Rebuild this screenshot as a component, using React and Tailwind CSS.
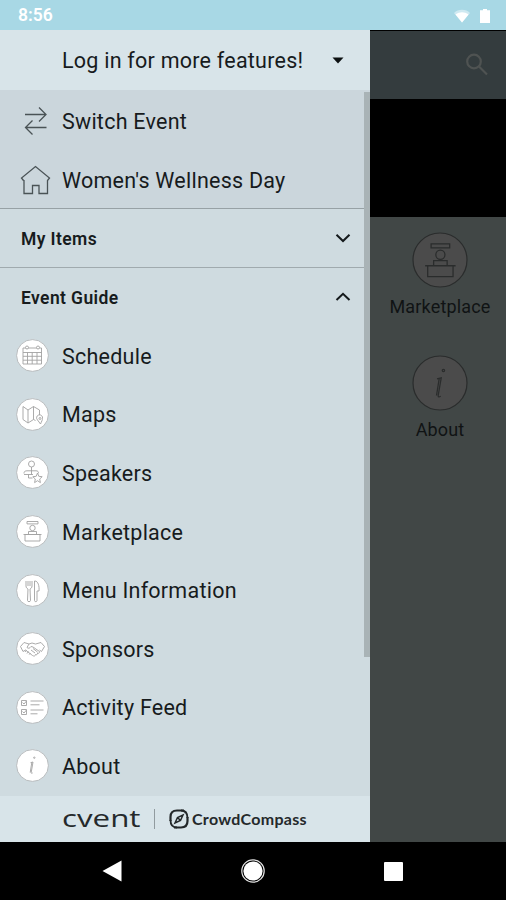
import { useState } from 'react';

const CalendarIcon = () => (
  <>
    <path d="M7 9h18.500v16H7zM7 13.500h18.500M7 17.300h18.500M7 21.200h18.500M11.500 13.500V25M16.200 13.500V25M21 13.500V25" />
    <circle cx="11" cy="8.500" r="1.500" fill="#fff" />
    <circle cx="22" cy="8.500" r="1.500" fill="#fff" />
  </>
);

const MapIcon = () => (
  <>
    <path d="M7 8.500l5 3.500v13l-5-3.500zM12 12l5.500-3.500v13L12 25M17.500 8.500l6 3.500v5M17.500 21.500l2 1" />
    <path d="M24.500 26l-3-4a3 3 0 1 1 5-1.500c0 1.500-1 3-2 5.500z" />
    <circle cx="24" cy="20.500" r="1" />
  </>
);

const SpeakerIcon = () => (
  <>
    <circle cx="15.500" cy="8" r="3" />
    <path d="M15.500 11v7.500M8 17.500c0-2 1-2.700 3-2.700h9c2 0 2.500 1 2.500 2.500M8 18.500h9M12.500 18.500v3.500h4" />
    <path d="M21.500 17l1.300 3.300 3.400.4-2.500 2.300.7 3.600-2.900-1.900-2.900 1.900.7-3.600-2.500-2.300 3.400-.4z" />
  </>
);

const MarketplaceIcon = () => (
  <>
    <path d="M11 6.500h11v2.400H11zM12.500 19v-2.500h8V19M9 19.500h15V26H9zM7.500 19.500h18" />
    <circle cx="16.500" cy="13" r="2.700" />
  </>
);

const MenuIcon = () => (
  <>
    <path d="M10 7v5c0 1.500 1 2.500 2 3l-.5 11.500c0 1.500 3 1.500 3 0L14 15c1-.5 2-1.500 2-3V7M12 7v5M14 7v5" />
    <path d="M19 7c3 0 4.500 5 4 10h-2v9.500c0 1.500-2.500 1.500-2.500 0V7z" />
  </>
);

const HandshakeIcon = () => (
  <>
    <path d="M8 10.500l-3.500 4 2.500 5 2.500-1.500M8 10.500l5 1.500 3-1 3.500 1 5.500-1.500 3.500 4-3 5-2-1.500M13 12l-2 3.500c1.500 1.500 3 .5 4-1l2 .5 6.500 4.500c.5 1.500-1 2.200-2 1.500.3 1.500-1 2.200-2 1.500 0 1.500-1.500 2-3 1L9.500 18" />
    <path d="M15 18l4 3M17 16.500l4.500 3.500M10.500 18l-1.500 2M12.500 19.500l-1.500 2M14.500 21l-1.300 1.600" />
  </>
);

const FeedIcon = () => (
  <>
    <path d="M5.500 9.500h5v5h-5zM5.500 18.500h5v5h-5zM14.500 10h13M14.500 13.800h9M14.500 19h13M14.500 22.800h7" />
    <path d="M6.500 11.500l1.500 1.500 2.500-3M6.500 20.500l1.500 1.500 2.500-3" />
  </>
);

const InfoIcon = () => (
  <>
    <path d="M14.500 13.700l2.500-.7-1.800 10.500c-.1 1 .5 1 1.500.4M15.800 13.500l-1.600 10" />
    <circle cx="18.300" cy="8.700" r=".7" />
  </>
);

const guideItems = [
  { label: 'Schedule', Icon: CalendarIcon },
  { label: 'Maps', Icon: MapIcon },
  { label: 'Speakers', Icon: SpeakerIcon },
  { label: 'Marketplace', Icon: MarketplaceIcon },
  { label: 'Menu Information', Icon: MenuIcon },
  { label: 'Sponsors', Icon: HandshakeIcon },
  { label: 'Activity Feed', Icon: FeedIcon },
  { label: 'About', Icon: InfoIcon },
];

const Chevron = ({ up }) => (
  <svg viewBox="0 0 16 10" className="w-4 h-2.5 mr-[19px]" fill="none" stroke="#14191b" strokeWidth="2">
    <path d={up ? 'M1.500 8L8 1.800 14.500 8' : 'M1.500 1.800L8 8l6.500-6.200'} />
  </svg>
);

const DrawerText = ({ children }) => (
  <span className="pt-[2px] text-[21.5px] leading-7 tracking-[0.24px]">{children}</span>
);

const StatusBar = () => (
  <div className="h-[30px] shrink-0 bg-[#a8d8e5] flex items-center justify-between pl-[18px] pr-[16px]">
    <span className="text-white text-[17.5px] font-semibold leading-none pt-[2px]">8:56</span>
    <div className="flex items-center gap-[9px] pt-[2px]">
      <svg viewBox="0 0 18 14" className="w-[18px] h-3.5">
        <path d="M1 4C5-.2 13-.2 17 4L9 13.500z" fill="#fff" opacity=".45" />
        <path d="M2.500 5.500c4-3 9-3 13 0L9 13.500z" fill="#fff" />
      </svg>
      <svg viewBox="0 0 10 14" className="w-2.5 h-3.5">
        <path d="M3 0h4v1.200h3V14H0V1.200h3z" fill="#fff" />
      </svg>
    </div>
  </div>
);

const Tile = ({ label, Icon }) => (
  <div className="flex flex-col items-center h-[123px]">
    <svg viewBox="0 0 56 56" className="w-14 h-14" fill="none" stroke="#2a2c2c">
      <circle cx="28" cy="28" r="27" fill="#4b4b4b" strokeWidth="1.200" />
      <g transform="translate(0.500 0.800) scale(1.690)" strokeWidth=".75">
        <Icon />
      </g>
    </svg>
    <span className="mt-[7px] text-[18px] leading-6 tracking-[0.160px] text-[#101314]">{label}</span>
  </div>
);

const App = () => {
  const [guideOpen, setGuideOpen] = useState(true);

  return (
    <div className="w-[506px] h-[900px] flex flex-col overflow-hidden bg-black font-['Roboto',sans-serif] text-[#171b1d]">
      <StatusBar />

      <div className="flex h-[812px] shrink-0">
        {/* Drawer */}
        <div className="w-[370px] shrink-0 flex flex-col bg-[#cfdbe0]">
          <div className="h-[60px] shrink-0 bg-[#d8e4e9] flex items-center justify-between pl-[62px] pr-[26px]">
            <DrawerText>Log in for more features!</DrawerText>
            <svg viewBox="0 0 12 7" className="w-3 h-[7px]">
              <path d="M.5.500h11L6 6.500z" fill="#0c1011" />
            </svg>
          </div>

          <div className="relative h-[706px] shrink-0 overflow-hidden">
            <div className="h-[119px] bg-[#cbd6dc] border-b border-[#97a1a5]">
              <div className="h-[62px] flex items-center">
                <svg viewBox="0 0 32 32" className="w-8 h-8 ml-5 mr-[10px]" fill="none" stroke="#4a5356" strokeWidth="1.300">
                  <path d="M5 9.500h21M19 2.500l7 7-7 7M26.500 22.500h-21M12.500 15.500l-7 7 7 7" />
                </svg>
                <DrawerText>Switch Event</DrawerText>
              </div>
              <div className="h-[56px] flex items-center">
                <svg viewBox="0 0 32 32" className="w-8 h-8 ml-5 mr-[10px]" fill="none" stroke="#4a5356" strokeWidth="1.300">
                  <path d="M3.500 16.500L1.500 14 15.500 2.500 29.500 14l-2 2.500V29.500h-8.500v-8h-6.500v8H4V16" />
                </svg>
                <DrawerText>Women's Wellness Day</DrawerText>
              </div>
            </div>

            <button className="w-full h-[59px] flex items-center justify-between pl-[21px] border-b border-[#a0aaae]">
              <span className="pt-[2px] text-[17.5px] font-semibold tracking-[0.4px]">My Items</span>
              <Chevron />
            </button>

            <button
              onClick={() => setGuideOpen(!guideOpen)}
              className="w-full h-[58.5px] flex items-center justify-between pl-[21px]"
            >
              <span className="pt-px text-[17.5px] font-semibold tracking-[0.4px]">Event Guide</span>
              <Chevron up={guideOpen} />
            </button>

            {guideOpen && guideItems.map(({ label, Icon }) => (
              <div key={label} className="h-[58.6px] flex items-center pl-4">
                <svg viewBox="0 0 33 33" className="w-[33px] h-[33px] mr-[13px]" fill="none" stroke="#a2a2a2" strokeWidth=".9">
                  <circle cx="16.500" cy="16.500" r="15.900" fill="#fff" stroke="#b2b6b8" />
                  <Icon />
                </svg>
                <DrawerText>{label}</DrawerText>
              </div>
            ))}

            {/* Scroll thumb */}
            <div className="absolute right-0 top-[2px] w-[6px] h-[565px] bg-[#a9b3b6]" />
          </div>

          <div className="h-[46px] shrink-0 bg-[#d8e4e9] flex items-center pl-[62px]">
            <span className="w-[80px] font-['Open_Sans',sans-serif] text-[23px] leading-none -mt-[2px] origin-left scale-x-[1.360] font-medium text-[#25292b]">cvent</span>
            <div className="w-px h-5 ml-3 bg-[#919b9f]" />
            <svg viewBox="0 0 20 20" className="w-5 h-5 ml-[14px] mr-[3px]" fill="none" stroke="#222729">
              <path d="M1.500 12V8c0-4.500 2-6.500 6.500-6.500h7M18.500 8v4c0 4.500-2 6.500-6.500 6.500H5" strokeWidth="2.200" />
              <path d="M1.500 11c0 5 2 7.500 6.500 7.500M18.500 9c0-5-2-7.500-6.500-7.500" strokeWidth="1.800" />
              <path d="M14 6l-2.500 5.500L6 14l2.500-5.500zM8.500 8.500l3 3" strokeWidth="1.500" />
            </svg>
            <span className="font-['Lato',sans-serif] text-[16px] tracking-[0.300px] font-bold leading-none -mt-px text-[#25292b]">CrowdCompass</span>
          </div>
        </div>

        {/* Dimmed page behind the drawer */}
        <div className="flex-1 bg-[#414746]">
          <div className="h-[69px] bg-[#343c3e] border-t border-black flex items-center justify-end pr-[17px]">
            <svg viewBox="0 0 24 24" className="w-6 h-6" fill="none" stroke="#4f5352" strokeWidth="2.200">
              <circle cx="9" cy="8.500" r="6.800" />
              <path d="M14 13.500l8 8" />
            </svg>
          </div>
          <div className="h-[118px] bg-black" />
          <div className="pt-[15px] pl-1">
            <Tile label="Marketplace" Icon={MarketplaceIcon} />
            <Tile label="About" Icon={InfoIcon} />
          </div>
        </div>
      </div>

      {/* System navigation */}
      <div className="flex-1 flex items-center pl-[102px]">
        <svg viewBox="0 0 20 22" className="w-5 h-[22px]">
          <path d="M19.500.500v21L.500 11z" fill="#fff" />
        </svg>
        <svg viewBox="0 0 24 24" className="w-6 h-6 ml-[119px]">
          <circle cx="12" cy="12" r="11.200" fill="none" stroke="#e4e4e4" strokeWidth="1.200" />
          <circle cx="12" cy="12" r="9.600" fill="#fff" />
        </svg>
        <div className="w-[19px] h-[19px] ml-[119px] rounded-[1px] bg-white" />
      </div>
    </div>
  );
};

export default App;
